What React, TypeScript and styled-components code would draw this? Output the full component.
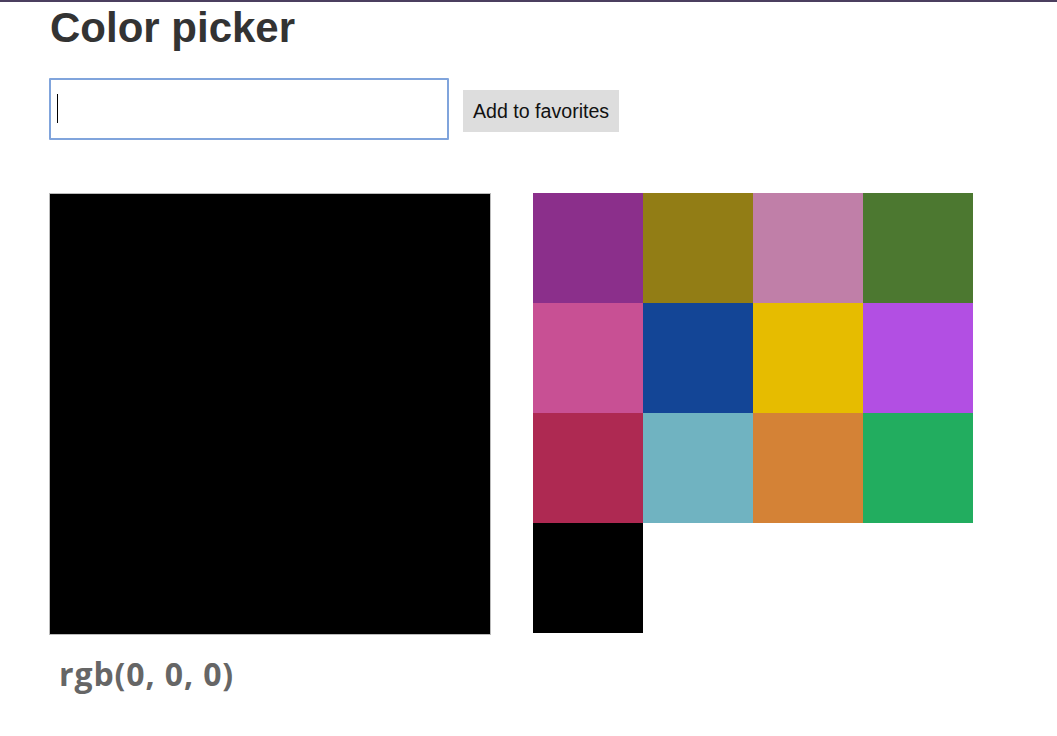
import React from 'react'
import styled, { createGlobalStyle } from 'styled-components'

const GlobalStyle = createGlobalStyle`
  html, body {
    margin: 0;
    padding: 0;
    background: #fff;
    font-family: "Liberation Sans", Arial, sans-serif;
  }
`

const Page = styled.div`
  border-top: 2px solid #4b3f5f;
  padding: 5px 0 0 49px;
`

const Title = styled.h1`
  margin: 0;
  padding-left: 1px;
  font-size: 42px;
  line-height: 41px;
  font-weight: 700;
  color: #333;
`

const FormRow = styled.div`
  display: flex;
  align-items: center;
  gap: 14px;
  margin-top: 30px;
`

const InputWrap = styled.div`
  position: relative;
  display: flex;
`

const ColorInput = styled.input`
  box-sizing: border-box;
  width: 400px;
  height: 62px;
  border: 2px solid #80a4dc;
  border-radius: 1px;
  padding: 0 6px;
  font-size: 20px;
  font-family: "Liberation Sans", Arial, sans-serif;
  outline: none;
  caret-color: #000;
`

const Caret = styled.span`
  position: absolute;
  left: 8px;
  top: 16px;
  width: 1px;
  height: 29px;
  background: #000;
  pointer-events: none;
`

const FavButton = styled.button`
  height: 42px;
  margin-top: 4px;
  padding: 0 10px;
  border: none;
  background: #ddd;
  color: #111;
  font-size: 19.6px;
  font-family: "Liberation Sans", Arial, sans-serif;
`

const Workspace = styled.div`
  display: flex;
  align-items: flex-start;
  gap: 42px;
  margin-top: 53px;
`

const PreviewColumn = styled.div`
  display: flex;
  flex-direction: column;
`

const Preview = styled.div<{ $color: string }>`
  width: 440px;
  height: 440px;
  border: 1px solid #bbb;
  background: ${p => p.$color};
`

const ColorLabel = styled.div`
  margin-top: 18px;
  padding-left: 10px;
  font-family: "Open Sans", "Noto Sans", sans-serif;
  font-weight: 700;
  font-size: 32px;
  letter-spacing: 0.9px;
  line-height: 42px;
  color: #666;
`

const Favorites = styled.div`
  display: grid;
  grid-template-columns: repeat(4, 110px);
  grid-auto-rows: 110px;
`

const Swatch = styled.div<{ $color: string }>`
  background: ${p => p.$color};
`

const favorites = [
  '#8b2f8b', '#927d15', '#c07fa8', '#4c7830',
  '#c85094', '#134596', '#e6bc00', '#b24fe3',
  '#ae2952', '#70b3c1', '#d48236', '#22ad5f',
  '#000000',
]

export default function App() {
  return (
    <>
      <GlobalStyle />
      <Page>
        <Title>Color picker</Title>
        <FormRow>
          <InputWrap>
            <ColorInput />
            <Caret />
          </InputWrap>
          <FavButton>Add to favorites</FavButton>
        </FormRow>
        <Workspace>
          <PreviewColumn>
            <Preview $color="#000" />
            <ColorLabel>rgb(0, 0, 0)</ColorLabel>
          </PreviewColumn>
          <Favorites>
            {favorites.map((c, i) => (
              <Swatch key={i} $color={c} />
            ))}
          </Favorites>
        </Workspace>
      </Page>
    </>
  )
}
